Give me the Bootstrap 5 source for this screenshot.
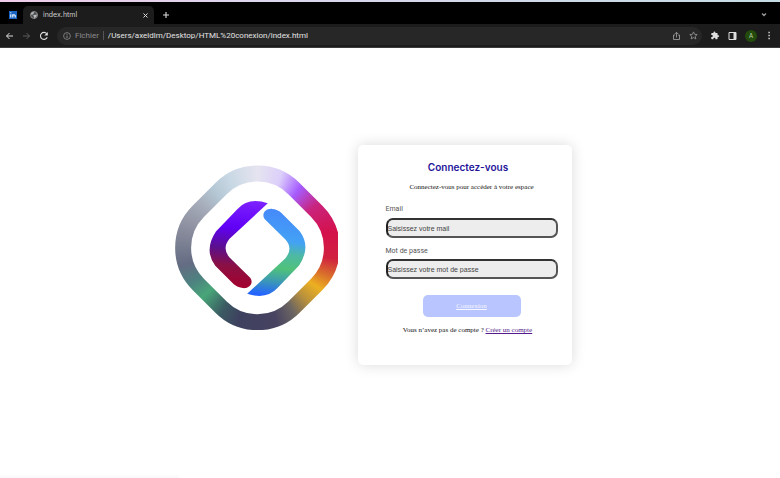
<!DOCTYPE html>
<html lang="fr">
<head>
<meta charset="utf-8">
<meta name="viewport" content="width=device-width, initial-scale=1">
<title>index.html</title>
<link href="https://cdn.jsdelivr.net/npm/bootstrap@5.3.0/dist/css/bootstrap.min.css" rel="stylesheet">
<style>
body { font-family: Inter, "Liberation Sans", sans-serif; font-size: 7px; line-height: 10px; background: #fff; }
.browser { background: #1c1c1c; border-bottom: 1px solid #3c3c3c; }
.tabstrip { background: #000; border-top: 2px solid #e3cfe9; border-image: linear-gradient(90deg, #efcbe9, #dcd6ee 35%, #c4dce4) 1; height: 24px; padding-left: 9px; padding-right: 11px; }
.chrome-btn { background: none; border: 0; padding: 0; color: #ddd; line-height: 0; display: flex; }
.chrome-btn svg { fill: none; stroke: currentColor; }
.pinned { width: 14px; }
.tab-open { background: #1c1c1c; color: #ccc; width: 131px; height: 18px; border-radius: 5px 5px 0 0; padding: 0 6px 0 7px; gap: 5px; }
.toolbar { height: 23px; padding: 0 7px 0 5px; }
.address { background: #272727; border-radius: 10px; height: 18px; padding: 0 4px 0 6px; color: #8d8d8d; }
.address label { border-right: 1px solid #555; line-height: 9px; padding-right: 4px; font: 8px/9px Roboto, sans-serif; }
.address input { background: none; border: 0; outline: 0; color: #e4e4e4; padding: 0 4px; min-width: 0; font: 8px/12px Roboto, sans-serif; }
.avatar { background: #234b0b; color: #c5d8b8; width: 12px; height: 12px; border-radius: 50%; font-size: 6px; line-height: 12px; justify-content: center; }
.dim { color: #5c5c5c; }
.soft { color: #999; }
.page { padding: 0 34px 12px 0; gap: 20px; }
.emblem { width: 163px; margin-bottom: 15px; }
.ring-paint { width: 500px; height: 500px; background: conic-gradient(#e5e4f0 0deg, #dccffa 18deg, #a55cff 35deg, #c9247e 54deg, #d4114c 78deg, #d0213f 98deg, #d96c2c 111deg, #ecb021 123deg, #b9913d 137deg, #6b6562 151deg, #474361 166deg, #3e405f 194deg, #3b5a62 209deg, #48a678 228deg, #4d8280 242deg, #646c83 257deg, #8a8d9d 284deg, #a7adbb 308deg, #b3c6d3 322deg, #c8d8e4 338deg, #e5e4f0 360deg); }
.login { width: 214px; background: #fff; border-radius: 5px; box-shadow: 0 0 14px rgba(0,0,0,.15); padding: 15px 14px 30px 28px; }
.login h1 { font-size: 10px; line-height: 14px; font-weight: 600; color: #24149a; margin: 0 7px 8px 0; }
.serif { font-family: "Liberation Serif", serif; color: #111; }
.login label { font-family: Roboto, sans-serif; color: #555; display: block; margin-bottom: 4px; }
.login label.tight { margin-bottom: 3px; }
.login .field { display: block; width: 100%; height: 20px; background: #ededed; border: 2px solid #555; border-top-color: #333; border-left-color: #222; border-radius: 7px; padding: 0; font-family: "Liberation Sans", Arial, sans-serif; font-size: 7px; color: #333; }
.field::placeholder { color: #444; opacity: 1; }
.submit { display: block; width: 98px; height: 22px; background: #b9c5ff; border: 0; border-radius: 5px; color: #f5f6ff; text-decoration: underline; margin: 16px auto 8px; }
.signup { color: #551a8b; }
.status-edge { height: 4px; width: 23%; background: linear-gradient(#fff, #f8f8f8); }
</style>
</head>
<body class="min-vh-100 d-flex flex-column">
<header class="browser">
  <div class="tabstrip d-flex align-items-end">
    <button class="chrome-btn pinned h-100 align-items-center pt-1" aria-label="LinkedIn"><svg width="8" height="8" viewBox="0 0 8 8"><path fill="#1764c4" stroke="none" d="M0 0h8v8H0z"/><path stroke="#fff" stroke-width="1.1" d="M1.8 3.2v3.3M1.8 1.3v1M3.8 6.5V3.2M3.8 4.5q1.2-1.5 2.4 0v2"/></svg></button>
    <div class="tab-open d-flex align-items-center">
      <svg width="8" height="8" viewBox="0 0 8 8"><circle cx="4" cy="4" r="3.5" fill="#4c4f52" stroke="#888"/><path fill="#b8babc" d="M1 2.2 3.4.8 4 2 2.8 3.4 1 3.6zM4 4l3-.5-.8 2.3L4.3 7.4 4 5.6 2.8 5z"/></svg>
      <span class="flex-grow-1">index.html</span>
      <button class="chrome-btn" aria-label="Fermer"><svg width="5" height="5" viewBox="0 0 5 5"><path d="m.5.5 4 4m0-4-4 4"/></svg></button>
    </div>
    <button class="chrome-btn h-100 align-items-center ms-2 pt-1" aria-label="Nouvel onglet"><svg width="8" height="8" viewBox="0 0 8 8"><path stroke-width="1.1" d="M4 1v6M1 4h6"/></svg></button>
    <button class="chrome-btn soft h-100 align-items-center ms-auto pt-1" aria-label="Onglets"><svg width="9" height="6" viewBox="0 0 9 6"><path stroke-width="1.3" d="m2 1.5 2 2 2-2"/></svg></button>
  </div>
  <div class="toolbar d-flex align-items-center gap-2">
    <button class="chrome-btn" aria-label="Retour"><svg width="9" height="8" viewBox="0 0 9 8"><path d="M8 4H1.5M4.5 1l-3 3 3 3"/></svg></button>
    <button class="chrome-btn dim" aria-label="Avancer"><svg width="9" height="8" viewBox="0 0 9 8"><path d="M1 4h6.5M4.5 1l3 3-3 3"/></svg></button>
    <button class="chrome-btn" aria-label="Actualiser"><svg width="10" height="10" viewBox="0 0 10 10"><path stroke-width="1.1" d="M8.2 6.3A3.5 3.5 0 1 1 7.7 2.7"/><path fill="currentColor" stroke="none" d="M8.8 1v3.5H5.3z"/></svg></button>
    <div class="address d-flex align-items-center flex-grow-1">
      <svg class="me-1" width="8" height="8" viewBox="0 0 8 8" fill="none" stroke="currentColor"><circle cx="4" cy="4" r="3.4" stroke-width=".8"/><path d="M4 3.6V6M4 1.9v.9"/></svg>
      <label for="url">Fichier</label>
      <input id="url" class="flex-grow-1" type="text" value="/Users/axeldlm/Desktop/HTML%20conexion/index.html">
      <button class="chrome-btn soft me-2" aria-label="Partager"><svg width="9" height="10" viewBox="0 0 9 10"><path stroke-width=".9" d="M3 4H1.5v4.500h6V4H6M4.500 6.500V1.500M2.800 3l1.700-1.700L6.200 3"/></svg></button>
      <button class="chrome-btn soft" aria-label="Favori"><svg width="9" height="9" viewBox="0 0 10 10"><path stroke-width=".9" d="m5 1 1.200 2.700 2.900.3-2.200 1.900.7 2.900L5 7.300 2.400 8.800l.7-2.900L.9 4l2.900-.3z"/></svg></button>
    </div>
    <button class="chrome-btn" aria-label="Extensions"><svg width="10" height="9" viewBox="0 0 24 24"><path fill="currentColor" stroke="none" d="M20.500 11H19V7a2 2 0 0 0-2-2h-4V3.500a2.500 2.500 0 0 0-5 0V5H4a2 2 0 0 0-2 2v3.800h1.500a2.700 2.700 0 0 1 0 5.400H2V20a2 2 0 0 0 2 2h3.800v-1.500a2.700 2.700 0 0 1 5.400 0V22H17a2 2 0 0 0 2-2v-4h1.500a2.500 2.500 0 0 0 0-5z"/></svg></button>
    <button class="chrome-btn" aria-label="Panneau"><svg width="9" height="8" viewBox="0 0 9 8"><path d="M1 .5h7v7H1z"/><path fill="currentColor" stroke="none" d="M5.500 1H8v6H5.500z"/></svg></button>
    <button class="chrome-btn avatar" aria-label="Profil">A</button>
    <button class="chrome-btn" aria-label="Menu"><svg width="8" height="9" viewBox="0 0 8 9"><path fill="currentColor" stroke="none" d="M3.400.8h1.400v1.400H3.400zm0 3h1.400v1.400H3.400zm0 3h1.400v1.400H3.400z"/></svg></button>
  </div>
</header>
<main class="page flex-grow-1 d-flex justify-content-center align-items-center">
  <svg class="emblem" viewBox="29 28 490 498" role="img" aria-label="Logo">
    <defs>
      <mask id="ring" maskUnits="userSpaceOnUse" x="20" y="20" width="520" height="520"><rect x="73.5" y="73.5" width="407" height="407" rx="155" transform="rotate(45 277 277)" fill="none" stroke="#fff" stroke-width="48"/></mask>
      <linearGradient id="violet" gradientUnits="userSpaceOnUse" x1="240" y1="133" x2="215" y2="400"><stop stop-color="#7d22ff"/><stop offset=".32" stop-color="#6000f6"/><stop offset=".55" stop-color="#5a1090"/><stop offset=".75" stop-color="#8a1044"/><stop offset="1" stop-color="#a6002c"/></linearGradient>
      <linearGradient id="azure" gradientUnits="userSpaceOnUse" x1="225" y1="398" x2="260" y2="140"><stop stop-color="#4689fb"/><stop offset=".35" stop-color="#43a2f4"/><stop offset=".5" stop-color="#4db9a4"/><stop offset=".67" stop-color="#50c27a"/><stop offset=".8" stop-color="#40a2a8"/><stop offset="1" stop-color="#2464ff"/></linearGradient>
      <path id="half" d="M308 143 193 250Q169 279 193 306L255 367C267 383 252 400 233 398Q217 397 205 386L150 331Q115 284 152 228L217 160Q250 124 308 143Z"/>
    </defs>
    <g mask="url(#ring)"><foreignObject x="27" y="27" width="500" height="500"><div class="ring-paint"></div></foreignObject></g>
    <use href="#half" fill="url(#violet)"/>
    <use href="#half" fill="url(#azure)" transform="rotate(180 277 279)"/>
  </svg>
  <form class="login">
    <h1 class="text-center">Connectez-vous</h1>
    <p class="serif text-center mb-2 pb-1">Connectez-vous pour accéder à votre espace</p>
    <label for="mail">Email</label>
    <input class="field mb-2" id="mail" type="email" placeholder="Saisissez votre mail">
    <label class="tight" for="pass">Mot de passe</label>
    <input class="field" id="pass" type="password" placeholder="Saisissez votre mot de passe">
    <button class="submit serif" type="button">Connexion</button>
    <p class="serif text-center mb-0 me-2">Vous n’avez pas de compte ? <a class="signup" href="#">Créer un compte</a></p>
  </form>
</main>
<div class="status-edge"></div>
</body>
</html>
